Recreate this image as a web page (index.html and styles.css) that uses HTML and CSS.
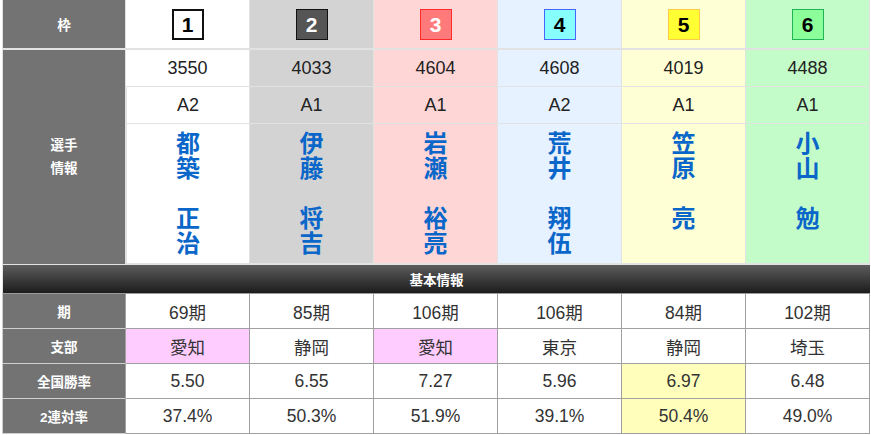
FILE: index.html
```html
<!DOCTYPE html>
<html lang="ja">
<head>
<meta charset="utf-8">
<title>出走表</title>
<link rel="stylesheet" href="styles.css">
</head>
<body>
<table class="race">
  <colgroup>
    <col class="c-label"><col class="c-data"><col class="c-data"><col class="c-data"><col class="c-data"><col class="c-data"><col class="c-data">
  </colgroup>
  <tbody>
    <tr class="r-head">
      <th class="lab">枠</th>
      <td class="w1"><span class="badge b1">1</span></td>
      <td class="w2"><span class="badge b2">2</span></td>
      <td class="w3"><span class="badge b3">3</span></td>
      <td class="w4"><span class="badge b4">4</span></td>
      <td class="w5"><span class="badge b5">5</span></td>
      <td class="w6"><span class="badge b6">6</span></td>
    </tr>
    <tr class="r-info">
      <th class="lab lab-tall" rowspan="3">選手<br>情報</th>
      <td class="w1">3550</td>
      <td class="w2">4033</td>
      <td class="w3">4604</td>
      <td class="w4">4608</td>
      <td class="w5">4019</td>
      <td class="w6">4488</td>
    </tr>
    <tr class="r-info">
      <td class="w1">A2</td>
      <td class="w2">A1</td>
      <td class="w3">A1</td>
      <td class="w4">A2</td>
      <td class="w5">A1</td>
      <td class="w6">A1</td>
    </tr>
    <tr class="r-name">
      <td class="w1">都<br>築<br><br>正<br>治</td>
      <td class="w2">伊<br>藤<br><br>将<br>吉</td>
      <td class="w3">岩<br>瀬<br><br>裕<br>亮</td>
      <td class="w4">荒<br>井<br><br>翔<br>伍</td>
      <td class="w5">笠<br>原<br><br>亮</td>
      <td class="w6">小<br>山<br><br>勉</td>
    </tr>
    <tr class="r-bar">
      <th colspan="7">基本情報</th>
    </tr>
    <tr class="r-low">
      <th class="lab">期</th>
      <td>69期</td>
      <td>85期</td>
      <td>106期</td>
      <td>106期</td>
      <td>84期</td>
      <td>102期</td>
    </tr>
    <tr class="r-low">
      <th class="lab">支部</th>
      <td class="hl-pink">愛知</td>
      <td>静岡</td>
      <td class="hl-pink">愛知</td>
      <td>東京</td>
      <td>静岡</td>
      <td>埼玉</td>
    </tr>
    <tr class="r-low">
      <th class="lab">全国勝率</th>
      <td>5.50</td>
      <td>6.55</td>
      <td>7.27</td>
      <td>5.96</td>
      <td class="hl-yellow">6.97</td>
      <td>6.48</td>
    </tr>
    <tr class="r-low">
      <th class="lab">2連対率</th>
      <td>37.4%</td>
      <td>50.3%</td>
      <td>51.9%</td>
      <td>39.1%</td>
      <td class="hl-yellow">50.4%</td>
      <td>49.0%</td>
    </tr>
  </tbody>
</table>
</body>
</html>
```

FILE: styles.css
```css
* { box-sizing: border-box; }

body {
  margin: 0;
  background: #fff;
  font-family: "Liberation Sans", "Noto Sans CJK JP", sans-serif;
  color: #222;
}

.race {
  margin-left: 2px;
  width: 868px;
  table-layout: fixed;
  border-collapse: separate;
  border-spacing: 0;
}

.c-label { width: 124px; }
.c-data { width: 124px; }

.race th,
.race td {
  padding: 0;
  text-align: center;
  vertical-align: middle;
  border-right: 1px solid #e2e2e2;
  border-bottom: 1px solid #e2e2e2;
}

.race tr > :first-child { border-left: 1px solid #e2e2e2; }

.lab {
  background: #737373;
  color: #fff;
  font-weight: bold;
  font-size: 13.5px;
}

.lab-tall { line-height: 23px; }

.w1 { background: #ffffff; }
.w2 { background: #d3d3d3; }
.w3 { background: #ffd6d6; }
.w4 { background: #e6f2ff; }
.w5 { background: #ffffd6; }
.w6 { background: #c3fcc8; }

/* header row */
.r-head th,
.r-head td {
  height: 50px;
  border-bottom: 2px solid #e2e2e2;
}

.badge {
  display: inline-block;
  width: 32px;
  height: 31px;
  line-height: 29px;
  font-size: 21px;
  font-weight: bold;
  border: 1px solid #000;
  vertical-align: middle;
}
.b1 { background: #fff; border: 2px solid #111; color: #000; line-height: 27px; }
.b2 { background: #555; border-color: #111; color: #fff; }
.b3 { background: #ff7b7b; border-color: #ff2a2a; color: #fff; }
.b4 { background: #88ffff; border-color: #4466ff; color: #000; }
.b5 { background: #ffff33; border-color: #ffc94a; color: #000; }
.b6 { background: #8dff9a; border-color: #1eb556; color: #000; }

/* info rows */
.r-info td {
  height: 37px;
  font-size: 18px;
  color: #222;
}

.r-name td {
  height: 141px;
  vertical-align: top;
  padding-top: 7px;
  font-size: 24px;
  line-height: 25px;
  font-weight: bold;
  color: #0a67c9;
  border-bottom: 2px solid #e2e2e2;
}

/* section bar */
.r-bar th {
  height: 29px;
  background: linear-gradient(#5c5c5c, #1c1c1c);
  color: #fff;
  font-size: 13.5px;
  font-weight: bold;
  border-right: 0;
  border-bottom: 1px solid #9a9a9a;
}

/* lower rows */
.r-low th,
.r-low td {
  height: 35px;
  border-bottom: 1px solid #a0a0a0;
  border-right: 1px solid #a0a0a0;
}
.r-low td {
  background: #fff;
  font-size: 17.5px;
  color: #333;
}
.r-low th.lab {
  border-bottom-color: #cfcfcf;
  border-right-color: #a0a0a0;
  border-left-color: #cfcfcf;
}

.r-low td.hl-pink { background: #ffccff; }
.r-low td.hl-yellow { background: #ffffbb; }
```
